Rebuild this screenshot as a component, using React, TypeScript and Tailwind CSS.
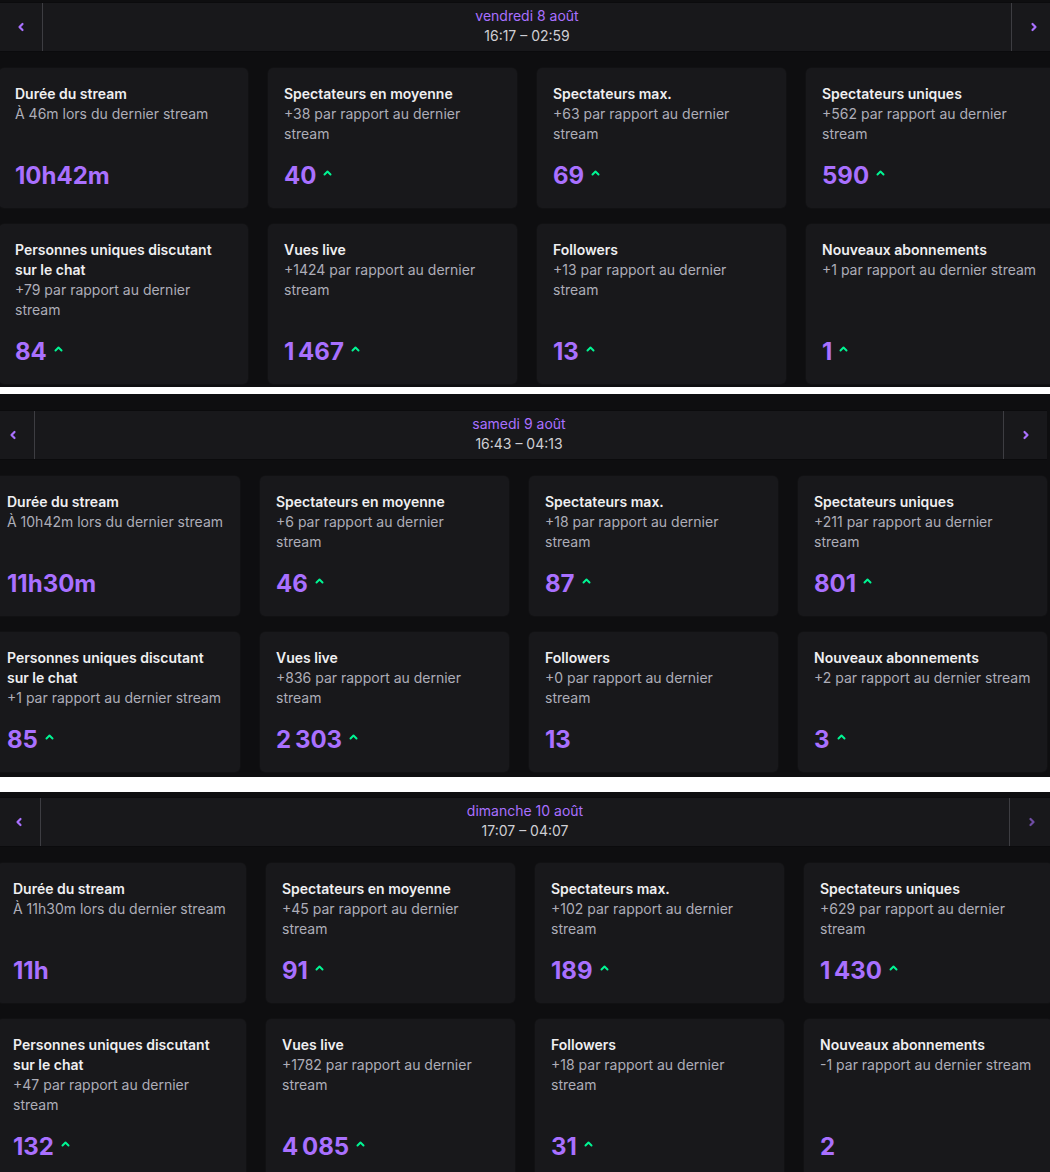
import React from "react";

type Stat = { title: string; sub: string; value: string; up?: boolean };

type PanelData = {
  date: string;
  time: string;
  stats: Stat[];
};

const panels: PanelData[] = [
  {
    date: "vendredi 8 août",
    time: "16:17 – 02:59",
    stats: [
      { title: "Durée du stream", sub: "À 46m lors du dernier stream", value: "10h42m" },
      { title: "Spectateurs en moyenne", sub: "+38 par rapport au dernier stream", value: "40", up: true },
      { title: "Spectateurs max.", sub: "+63 par rapport au dernier stream", value: "69", up: true },
      { title: "Spectateurs uniques", sub: "+562 par rapport au dernier stream", value: "590", up: true },
      { title: "Personnes uniques discutant sur le chat", sub: "+79 par rapport au dernier stream", value: "84", up: true },
      { title: "Vues live", sub: "+1424 par rapport au dernier stream", value: "1\u202f467", up: true },
      { title: "Followers", sub: "+13 par rapport au dernier stream", value: "13", up: true },
      { title: "Nouveaux abonnements", sub: "+1 par rapport au dernier stream", value: "1", up: true },
    ],
  },
  {
    date: "samedi 9 août",
    time: "16:43 – 04:13",
    stats: [
      { title: "Durée du stream", sub: "À 10h42m lors du dernier stream", value: "11h30m" },
      { title: "Spectateurs en moyenne", sub: "+6 par rapport au dernier stream", value: "46", up: true },
      { title: "Spectateurs max.", sub: "+18 par rapport au dernier stream", value: "87", up: true },
      { title: "Spectateurs uniques", sub: "+211 par rapport au dernier stream", value: "801", up: true },
      { title: "Personnes uniques discutant sur le chat", sub: "+1 par rapport au dernier stream", value: "85", up: true },
      { title: "Vues live", sub: "+836 par rapport au dernier stream", value: "2\u202f303", up: true },
      { title: "Followers", sub: "+0 par rapport au dernier stream", value: "13" },
      { title: "Nouveaux abonnements", sub: "+2 par rapport au dernier stream", value: "3", up: true },
    ],
  },
  {
    date: "dimanche 10 août",
    time: "17:07 – 04:07",
    stats: [
      { title: "Durée du stream", sub: "À 11h30m lors du dernier stream", value: "11h" },
      { title: "Spectateurs en moyenne", sub: "+45 par rapport au dernier stream", value: "91", up: true },
      { title: "Spectateurs max.", sub: "+102 par rapport au dernier stream", value: "189", up: true },
      { title: "Spectateurs uniques", sub: "+629 par rapport au dernier stream", value: "1\u202f430", up: true },
      { title: "Personnes uniques discutant sur le chat", sub: "+47 par rapport au dernier stream", value: "132", up: true },
      { title: "Vues live", sub: "+1782 par rapport au dernier stream", value: "4\u202f085", up: true },
      { title: "Followers", sub: "+18 par rapport au dernier stream", value: "31", up: true },
      { title: "Nouveaux abonnements", sub: "-1 par rapport au dernier stream", value: "2" },
    ],
  },
];

function Chevron({ dir, dim }: { dir: "left" | "right"; dim?: boolean }) {
  return (
    <svg width="8" height="10" viewBox="0 0 8 10" className={dim ? "opacity-60" : ""}>
      <path
        d={dir === "left" ? "M5.5 2 L2.5 5 L5.5 8" : "M2.5 2 L5.5 5 L2.5 8"}
        fill="none"
        stroke="#a970ff"
        strokeWidth="2.2"
        strokeLinecap="round"
        strokeLinejoin="round"
      />
    </svg>
  );
}

function UpIcon() {
  return (
    <svg width="9" height="6" viewBox="0 0 9 6" className="ml-[7px] mt-[-6px]">
      <path d="M1.5 4.5 L4.5 1.5 L7.5 4.5" fill="none" stroke="#00f593" strokeWidth="2" strokeLinecap="round" strokeLinejoin="round" />
    </svg>
  );
}

function Card({ s }: { s: Stat }) {
  return (
    <div className="flex flex-col rounded-[5px] bg-[#18181b] p-4 shadow-[0_0_0_1px_#111113]">
      <div className="text-[14px] leading-5 font-semibold text-[#efeff1]">{s.title}</div>
      <div className="text-[14px] leading-5 text-[#adadb8]">{s.sub}</div>
      <div className="mt-auto flex items-center pt-4">
        <span className="text-[24px] leading-8 font-bold text-[#a970ff]">{s.value}</span>
        {s.up && <UpIcon />}
      </div>
    </div>
  );
}

function Panel({ p, className, dimRight }: { p: PanelData; className: string; dimRight?: boolean }) {
  return (
    <div className={"w-[1056px] " + className}>
      <div className="flex h-[50px] border-y border-[#0b0b0d] bg-[#18181b]">
        <div className="flex w-[44px] items-center justify-center border-r border-[#3d3d42]">
          <Chevron dir="left" />
        </div>
        <div className="flex flex-1 flex-col items-center justify-center pb-[2px] text-[14px] leading-5">
          <div className="text-[#a970ff]">{p.date}</div>
          <div className="text-[#cfcfd4]">{p.time}</div>
        </div>
        <div className="flex w-[44px] items-center justify-center border-l border-[#3d3d42]">
          <Chevron dir="right" dim={dimRight} />
        </div>
      </div>
      <div className="mt-4 grid grid-cols-4 gap-x-5 gap-y-4">
        {p.stats.map((s, i) => (
          <Card key={i} s={s} />
        ))}
      </div>
    </div>
  );
}

export default function App() {
  return (
    <div
      className="h-[1172px] w-[1050px] overflow-hidden bg-[#0e0e10]"
      style={{ fontFamily: "Inter, 'Noto Sans', sans-serif" }}
    >
      <Panel p={panels[0]} className="ml-[-1px] pt-[2px] pb-[3px]" />
      <div className="h-[7px] bg-white" />
      <Panel p={panels[1]} className="ml-[-9px] pt-[16px] pb-[5px]" />
      <div className="h-[15px] bg-white" />
      <Panel p={panels[2]} className="ml-[-3px] pt-[5px]" dimRight />
    </div>
  );
}
